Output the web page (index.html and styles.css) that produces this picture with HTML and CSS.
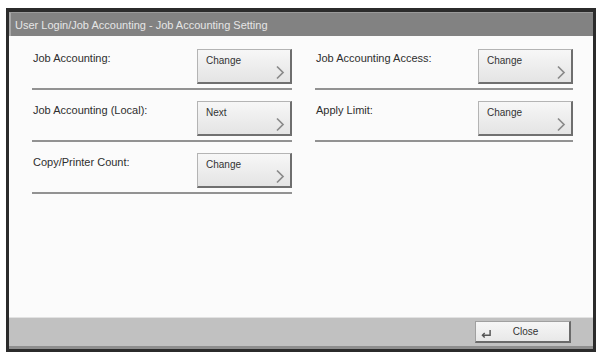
FILE: index.html
```html
<!DOCTYPE html>
<html lang="en">
<head>
    <meta charset="UTF-8">
    <meta name="viewport" content="width=device-width, initial-scale=1.0">
    <title>Job Accounting Setting</title>
    <link rel="stylesheet" href="styles.css">
</head>
<body>
    <div class="panel">
        <header class="title-bar">User Login/Job Accounting - Job Accounting Setting</header>

        <main class="content">
            <div class="settings">
                <div class="setting">
                    <span class="setting-label">Job Accounting:</span>
                    <button class="key-button">Change
                        <svg class="chevron" viewBox="0 0 10 14"><polyline points="2 1 8 7 2 13"></polyline></svg>
                    </button>
                </div>
                <div class="setting">
                    <span class="setting-label">Job Accounting Access:</span>
                    <button class="key-button">Change
                        <svg class="chevron" viewBox="0 0 10 14"><polyline points="2 1 8 7 2 13"></polyline></svg>
                    </button>
                </div>
                <div class="setting">
                    <span class="setting-label">Job Accounting (Local):</span>
                    <button class="key-button">Next
                        <svg class="chevron" viewBox="0 0 10 14"><polyline points="2 1 8 7 2 13"></polyline></svg>
                    </button>
                </div>
                <div class="setting">
                    <span class="setting-label">Apply Limit:</span>
                    <button class="key-button">Change
                        <svg class="chevron" viewBox="0 0 10 14"><polyline points="2 1 8 7 2 13"></polyline></svg>
                    </button>
                </div>
                <div class="setting">
                    <span class="setting-label">Copy/Printer Count:</span>
                    <button class="key-button">Change
                        <svg class="chevron" viewBox="0 0 10 14"><polyline points="2 1 8 7 2 13"></polyline></svg>
                    </button>
                </div>
            </div>
        </main>

        <footer class="footer-bar">
            <button class="close-button">
                <svg class="enter-icon" viewBox="0 0 12 10"><polyline points="10 1 10 7 2 7"></polyline><polyline points="4 4.5 1.5 7 4 9.5"></polyline></svg>
                <span>Close</span>
            </button>
        </footer>
    </div>
</body>
</html>
```

FILE: styles.css
```css
*{margin:0;padding:0;box-sizing:border-box}
body{font-family:"Liberation Sans",Arial,sans-serif;background:#fff;color:#333;padding:8px 5px 2px 6px}

.panel{width:590px;height:344px;border:3px solid #2b2b2b;border-top-width:4px;display:flex;flex-direction:column;background:#fbfbfb}

.title-bar{height:24px;background:#828282;color:#e6e6e6;font-size:11px;line-height:24px;padding-left:4px;border-top:1px solid #9a9a9a;border-left:2px solid #a8a8a8}

.content{flex:1;padding:2px 20px 0 23px}
.settings{display:grid;grid-template-columns:260px 258px;column-gap:23px;align-items:start}
.setting{display:flex;justify-content:space-between;align-items:flex-start;padding:11px 0 4px;border-bottom:2px solid #929292}
.setting-label{font-size:11px;line-height:13px;padding:3px 0 0 1px;color:#2e2e2e}

.key-button{position:relative;width:95px;height:35px;font-family:inherit;font-size:10px;color:#333;display:flex;align-items:flex-start;padding:5px 0 0 8px;line-height:12px;background:linear-gradient(#f7f7f7,#e4e4e4);border:1px solid #b4b4b4;border-right:2px solid #6e6e6e;border-bottom:2px solid #707070;cursor:pointer}
.chevron{position:absolute;right:5px;bottom:2px;width:10px;height:15px;fill:none;stroke:#8a8a8a;stroke-width:1.7}

.footer-bar{height:32px;background:#c1c1c1;border-top:1px solid #e2e2e2;border-bottom:3px solid #8e8e8e;display:flex;justify-content:flex-end;align-items:center;padding-right:22px}
.close-button{width:96px;height:22px;display:flex;align-items:center;background:linear-gradient(#f6f6f6,#e8e8e8);border:1px solid #a0a0a0;border-right:2px solid #6a6a6a;border-bottom:2px solid #6a6a6a;font-family:inherit;font-size:10px;color:#333;padding-left:5px;cursor:pointer}
.close-button span{flex:1;text-align:center;padding-right:10px}
.enter-icon{width:11px;height:9px;fill:none;stroke:#555;stroke-width:1.6;margin-top:3px}
```
